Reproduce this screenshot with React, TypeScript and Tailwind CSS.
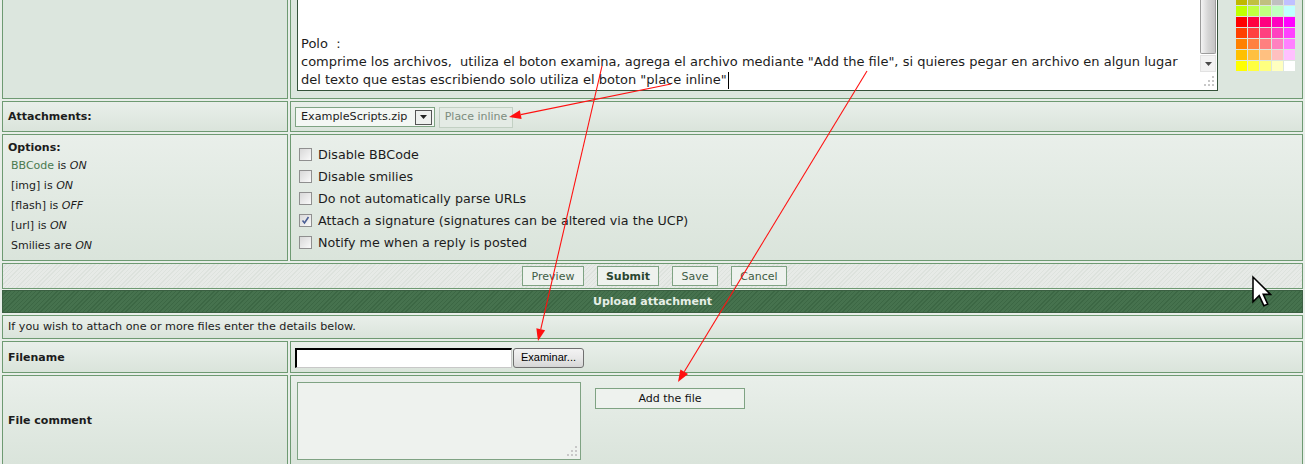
import React from 'react';

const pal: string[][] = [
  ['#c0b800', '#c0c040', '#c0c080', '#c0c0c0', '#c0c0ff'],
  ['#c0ff00', '#c0ff40', '#c0ff80', '#c0ffc0', '#c0ffff'],
  ['#ff0000', '#ff0040', '#ff0080', '#ff00c0', '#ff00ff'],
  ['#ff4000', '#ff4040', '#ff4080', '#ff40c0', '#ff40ff'],
  ['#ff8000', '#ff8040', '#ff8080', '#ff80c0', '#ff80ff'],
  ['#ffc000', '#ffc040', '#ffc080', '#ffc0c0', '#ffc0ff'],
  ['#ffff00', '#ffff40', '#ffff80', '#ffffc0', '#ffffff'],
];

function Arrow({ x1, y1, x2, y2 }: { x1: number; y1: number; x2: number; y2: number }) {
  const dx = x2 - x1;
  const dy = y2 - y1;
  const L = Math.hypot(dx, dy);
  const ux = dx / L;
  const uy = dy / L;
  const hl = 12;
  const hw = 4.5;
  const bx = x2 - ux * hl;
  const by = y2 - uy * hl;
  const p = `${x2},${y2} ${bx - uy * hw},${by + ux * hw} ${bx + uy * hw},${by - ux * hw}`;
  return (
    <g>
      <line x1={x1} y1={y1} x2={bx} y2={by} stroke="#ff1010" strokeWidth="1.1" />
      <polygon points={p} fill="#ff1010" />
    </g>
  );
}

function Grip() {
  return (
    <svg width="11" height="11" viewBox="0 0 11 11">
      <rect x="8" y="0" width="2" height="2" fill="#c8c8c8" />
      <rect x="4" y="4" width="2" height="2" fill="#c8c8c8" />
      <rect x="8" y="4" width="2" height="2" fill="#c8c8c8" />
      <rect x="0" y="8" width="2" height="2" fill="#c8c8c8" />
      <rect x="4" y="8" width="2" height="2" fill="#c8c8c8" />
      <rect x="8" y="8" width="2" height="2" fill="#c8c8c8" />
    </svg>
  );
}

function Checkbox({ checked }: { checked?: boolean }) {
  return (
    <div className="relative w-[13px] h-[13px] border border-[#8f8f8f] bg-linear-to-br from-[#d8d8d8] to-[#fafafa] shrink-0">
      {checked && (
        <svg className="absolute left-[1px] top-[1px]" width="9" height="9" viewBox="0 0 9 9">
          <path d="M1.5 4.5 L3.5 7 L7.5 1" stroke="#4b5f95" strokeWidth="1.6" fill="none" />
        </svg>
      )}
    </div>
  );
}

const cell = 'border border-[#6e9a72] bg-linear-to-b from-[#e9efea] to-[#dae4db]';

export default function App() {
  return (
    <div className="relative w-[1305px] h-[464px] overflow-hidden bg-[#e8eee9] font-['DejaVu_Sans',Verdana,sans-serif] text-[#1c1c1c]">
      <div className="pl-[2px] w-[1303px] flex flex-col">
        {/* Row 1: textarea */}
        <div className="grid grid-cols-[286px_1013px] gap-[2px] h-[99px]">
          <div className="border-x border-b border-[#6e9a72] bg-[#dce6de]" />
          <div className="border-x border-b border-[#6e9a72] bg-[#dce6de] flex items-start pl-[6px]">
            <div className="w-[921px] h-[91px] border-x border-b border-[#34523a] bg-white flex">
              <div className="flex-1 flex flex-col justify-end pl-[3px] pb-[1px] text-[13px] leading-[18px]">
                <div className="whitespace-pre">Polo  :</div>
                <div className="whitespace-pre">comprime los archivos,  utiliza el boton examina, agrega el archivo mediante "Add the file", si quieres pegar en archivo en algun lugar</div>
                <div className="whitespace-pre flex items-center">
                  del texto que estas escribiendo solo utiliza el boton "place inline"
                  <span className="inline-block w-[1px] h-[17px] bg-black ml-[1px]" />
                </div>
              </div>
              <div className="w-[17px] flex flex-col items-end pr-[1px]">
                <div className="w-[16px] h-[54px] border border-[#9c9c9c] border-t-0 rounded-b-[2px] bg-linear-to-r from-[#f4f4f4] via-[#d6d6d6] to-[#c4c4c4]" />
                <div className="w-[16px] h-[17px] mt-[1px] bg-[#f2f2f2] border border-[#e2e2e2] flex items-center justify-center">
                  <svg width="7" height="4" viewBox="0 0 7 4">
                    <polygon points="0,0 7,0 3.5,4" fill="#4a4a4a" />
                  </svg>
                </div>
                <div className="mt-[4px] mr-[1px]">
                  <Grip />
                </div>
              </div>
            </div>
            <div className="ml-[18px] flex flex-col gap-[1px]">
              {pal.map((row, i) => (
                <div key={i} className="flex gap-[1px]">
                  {row.map((c, j) => (
                    <div
                      key={j}
                      className={i === 0 ? 'w-[11px] h-[5px]' : 'w-[11px] h-[10px]'}
                      style={{ backgroundColor: c }}
                    />
                  ))}
                </div>
              ))}
            </div>
          </div>
        </div>

        {/* Attachments */}
        <div className="grid grid-cols-[286px_1013px] gap-[2px] h-[31px] mt-[2px]">
          <div className={`${cell} flex items-center pl-[5px] pt-[2px] text-[11px] font-bold`}>Attachments:</div>
          <div className={`${cell} flex items-center pl-[4px] pt-[1px] gap-[4px]`}>
            <div className="w-[140px] h-[20px] border border-[#7fa383] bg-[#f4f7f4] flex items-center pl-[5px] pr-[2px] justify-between text-[11.2px]">
              <span className="pt-[1px]">ExampleScripts.zip</span>
              <div className="w-[17px] h-[15px] border border-[#555] bg-[#eef0ee] flex items-center justify-center">
                <svg width="7" height="4" viewBox="0 0 7 4">
                  <polygon points="0,0 7,0 3.5,4" fill="#222" />
                </svg>
              </div>
            </div>
            <div className="w-[74px] h-[21px] border border-[#c2d0c3] bg-[#e4ebe5] flex items-center justify-center pt-[1px] text-[11px] text-[#7c8c7e]">
              Place inline
            </div>
          </div>
        </div>

        {/* Options */}
        <div className="grid grid-cols-[286px_1013px] gap-[2px] h-[127px] mt-[2px]">
          <div className={`${cell} pl-[5px] pt-[6px]`}>
            <div className="text-[11px] font-bold leading-[14px]">Options:</div>
            <div className="pl-[3px] text-[11px] leading-[20px] mt-[1px]">
              <div><span className="text-[#4a7a4f]">BBCode</span> is <i>ON</i></div>
              <div>[img] is <i>ON</i></div>
              <div>[flash] is <i>OFF</i></div>
              <div>[url] is <i>ON</i></div>
              <div>Smilies are <i>ON</i></div>
            </div>
          </div>
          <div className={`${cell} pl-[8px] pt-[8px] text-[12.7px]`}>
            {[
              ['Disable BBCode', false],
              ['Disable smilies', false],
              ['Do not automatically parse URLs', false],
              ['Attach a signature (signatures can be altered via the UCP)', true],
              ['Notify me when a reply is posted', false],
            ].map(([t, c], i) => (
              <div key={i} className="h-[22px] flex items-center gap-[6px]">
                <Checkbox checked={c as boolean} />
                <span className="pt-[1px]">{t as string}</span>
              </div>
            ))}
          </div>
        </div>

        {/* Buttons */}
        <div className="mt-[2px] h-[26px] border border-[#6e9a72] bg-[repeating-linear-gradient(135deg,#e7eae7_0px,#e7eae7_2px,#dde2dd_2px,#dde2dd_3px)] flex items-center justify-center gap-[13px] pl-[4px] text-[11px]">
          <div className="w-[62px] h-[20px] border border-[#7fa383] bg-[#eef2ee] flex items-center justify-center pt-[2px] text-[#3f5c45]">Preview</div>
          <div className="w-[62px] h-[20px] border border-[#7fa383] bg-[#eef2ee] flex items-center justify-center pt-[2px] font-bold text-[#2a4530]">Submit</div>
          <div className="w-[46px] h-[20px] border border-[#7fa383] bg-[#eef2ee] flex items-center justify-center pt-[2px] text-[#3f5c45]">Save</div>
          <div className="w-[56px] h-[20px] border border-[#7fa383] bg-[#eef2ee] flex items-center justify-center pt-[2px] text-[#3f5c45]">Cancel</div>
        </div>

        {/* Header */}
        <div className="mt-[1px] h-[23px] border border-[#3a5f41] bg-[repeating-linear-gradient(135deg,#46724e_0px,#46724e_2px,#3c6744_2px,#3c6744_3px)] flex items-center justify-center pt-[2px] text-[11px] font-bold text-[#e6efe6]">
          Upload attachment
        </div>

        {/* Info */}
        <div className={`mt-[2px] h-[24px] ${cell} flex items-center pl-[5px] pt-[1px] text-[11.2px]`}>
          If you wish to attach one or more files enter the details below.
        </div>

        {/* Filename */}
        <div className="grid grid-cols-[286px_1013px] gap-[2px] h-[32px] mt-[2px]">
          <div className={`${cell} flex items-center pl-[5px] pt-[2px] text-[11px] font-bold`}>Filename</div>
          <div className={`${cell} flex items-center pl-[4px] pt-[1px]`}>
            <div className="w-[217px] h-[20px] bg-white border-t-2 border-l-2 border-t-black border-l-black border-b border-r border-b-[#c8c8c8] border-r-[#c8c8c8]" />
            <div className="ml-[1px] w-[71px] h-[20px] rounded-[3px] border border-[#707070] bg-linear-to-b from-[#f3f3f3] via-[#e8e8e8] to-[#d6d6d6] flex items-center justify-center font-['Liberation_Sans',Arial,sans-serif] text-[11px] text-black">
              Examinar...
            </div>
          </div>
        </div>

        {/* File comment */}
        <div className="grid grid-cols-[286px_1013px] gap-[2px] h-[90px] mt-[2px]">
          <div className={`${cell} flex items-center pl-[5px] pt-[2px] text-[11px] font-bold`}>File comment</div>
          <div className={`${cell} flex items-start pl-[6px] pt-[6px]`}>
            <div className="w-[284px] h-[78px] border border-[#7fa383] bg-[#eef2ee] flex items-end justify-end pr-[2px] pb-[2px]">
              <Grip />
            </div>
            <div className="ml-[14px] mt-[6px] w-[150px] h-[21px] border border-[#7fa383] bg-[#eef2ee] flex items-center justify-center pt-[1px] text-[11px] text-[#111]">
              Add the file
            </div>
          </div>
        </div>
      </div>

      {/* Overlay annotations */}
      <svg className="absolute left-0 top-0 pointer-events-none" width="1305" height="464" viewBox="0 0 1305 464">
        <Arrow x1={671} y1={84} x2={509} y2={117} />
        <Arrow x1={602} y1={66} x2={538} y2={341} />
        <Arrow x1={867} y1={71} x2={678} y2={382} />
        <g transform="translate(1253,277) scale(1.55)">
          <path d="M0,0 L0,16 L4,12 L7,18.5 L9.5,17.5 L6.6,11.2 L11.3,11.2 Z" fill="white" stroke="black" strokeWidth="1" strokeLinejoin="miter" />
        </g>
      </svg>
    </div>
  );
}
